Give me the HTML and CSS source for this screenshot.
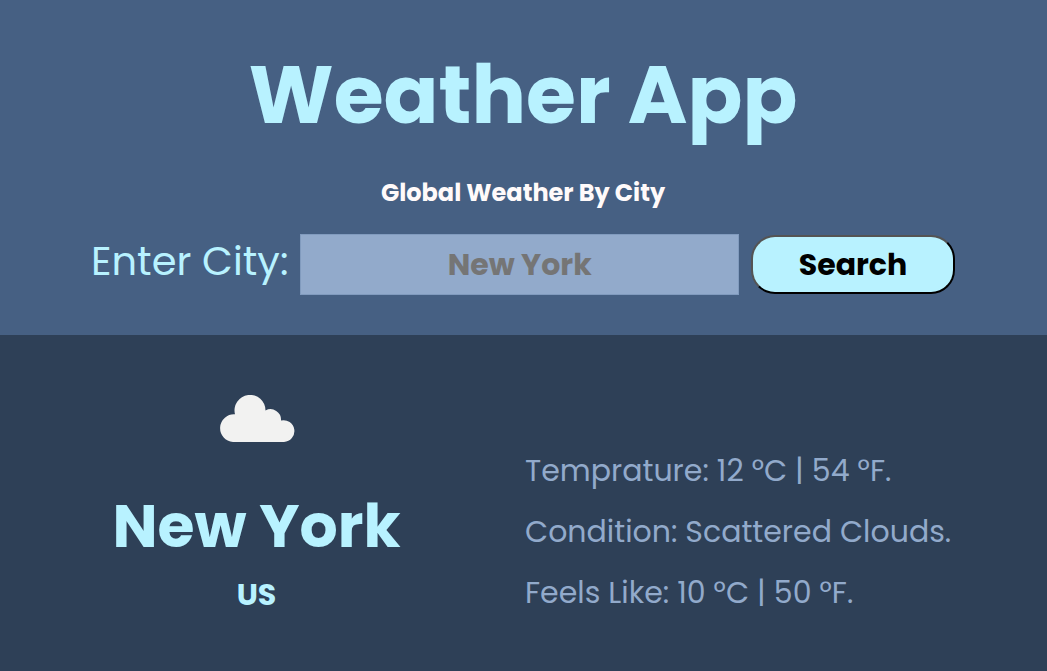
FILE: index.html
```html
<!DOCTYPE html>
<html lang="en">
<head>
<meta charset="utf-8">
<title>Weather App</title>
<link rel="stylesheet" href="styles.css">
</head>
<body>
<header class="top">
  <h1 class="title">Weather App</h1>
  <h2 class="subtitle">Global Weather By City</h2>
  <form class="search">
    <label class="search-label" for="city">Enter City:</label>
    <input class="search-input" id="city" type="text" placeholder="New York">
    <button class="search-button" type="button">Search</button>
  </form>
</header>
<main class="result">
  <section class="place">
    <svg class="cloud" viewBox="0 0 76 48" aria-hidden="true">
      <path fill="#f2f2f1" d="M14 47A13.800 13.800 0 1 1 16 19.300A15.500 15.500 0 1 1 46.500 15.500A10.500 10.500 0 0 1 62 25.500A10.900 10.900 0 1 1 65 47Z"/>
    </svg>
    <h2 class="city">New York</h2>
    <h3 class="country">US</h3>
  </section>
  <section class="details">
    <p class="detail">Temprature: 12 °C | 54 °F.</p>
    <p class="detail">Condition: Scattered Clouds.</p>
    <p class="detail">Feels Like: 10 °C | 50 °F.</p>
  </section>
</main>
</body>
</html>
```
FILE: styles.css
```css
* { box-sizing: border-box; }
body {
  margin: 0;
  min-height: 100vh;
  display: flex;
  flex-direction: column;
  background: #2e4057;
  font-family: Poppins, Inter, "Open Sans", sans-serif;
}
h1, h2, h3, p { margin: 0; }
.top {
  padding: 39px 92px 40px 91px;
  background: #466083;
  text-align: center;
}
.title { color: #b8f2ff; font-size: 81px; line-height: 112px; font-weight: 700; }
.subtitle { margin-top: 25px; color: #fffafa; font-size: 24px; line-height: 34px; font-weight: 700; }
.search { display: flex; align-items: center; margin-top: 24px; }
.search-label { align-self: flex-start; color: #b8f2ff; font-size: 40px; line-height: 54px; white-space: nowrap; }
.search-input {
  flex: 1;
  min-width: 0;
  height: 61px;
  margin: 0 12px;
  padding: 0 8px;
  border: 1px solid #819bbe;
  background: #92aacb;
  color: #222;
  font: 700 30px Poppins, Inter, sans-serif;
  text-align: center;
}
.search-input::placeholder { color: #757575; opacity: 1; }
.search-button {
  width: 204px;
  height: 59px;
  border: 2px outset #000;
  border-radius: 24px;
  background: #b8f2ff;
  color: #000;
  font: 700 30px Poppins, Inter, sans-serif;
}
.result {
  flex: 1;
  display: grid;
  grid-template-columns: 289px 1fr;
  column-gap: 124px;
  padding: 60px 92px 48px 112px;
}
.place { text-align: center; color: #b8f2ff; }
.cloud { display: block; width: 76px; height: 48px; margin: 0 auto; }
.city { margin-top: 47px; font-size: 60px; line-height: 72px; font-weight: 700; white-space: nowrap; }
.country { margin-top: 14px; font-size: 30px; line-height: 38px; font-weight: 700; }
.details { display: grid; row-gap: 20px; align-content: start; padding-top: 55px; }
.detail { color: #92aacb; font-size: 30px; line-height: 41px; white-space: nowrap; }
```
